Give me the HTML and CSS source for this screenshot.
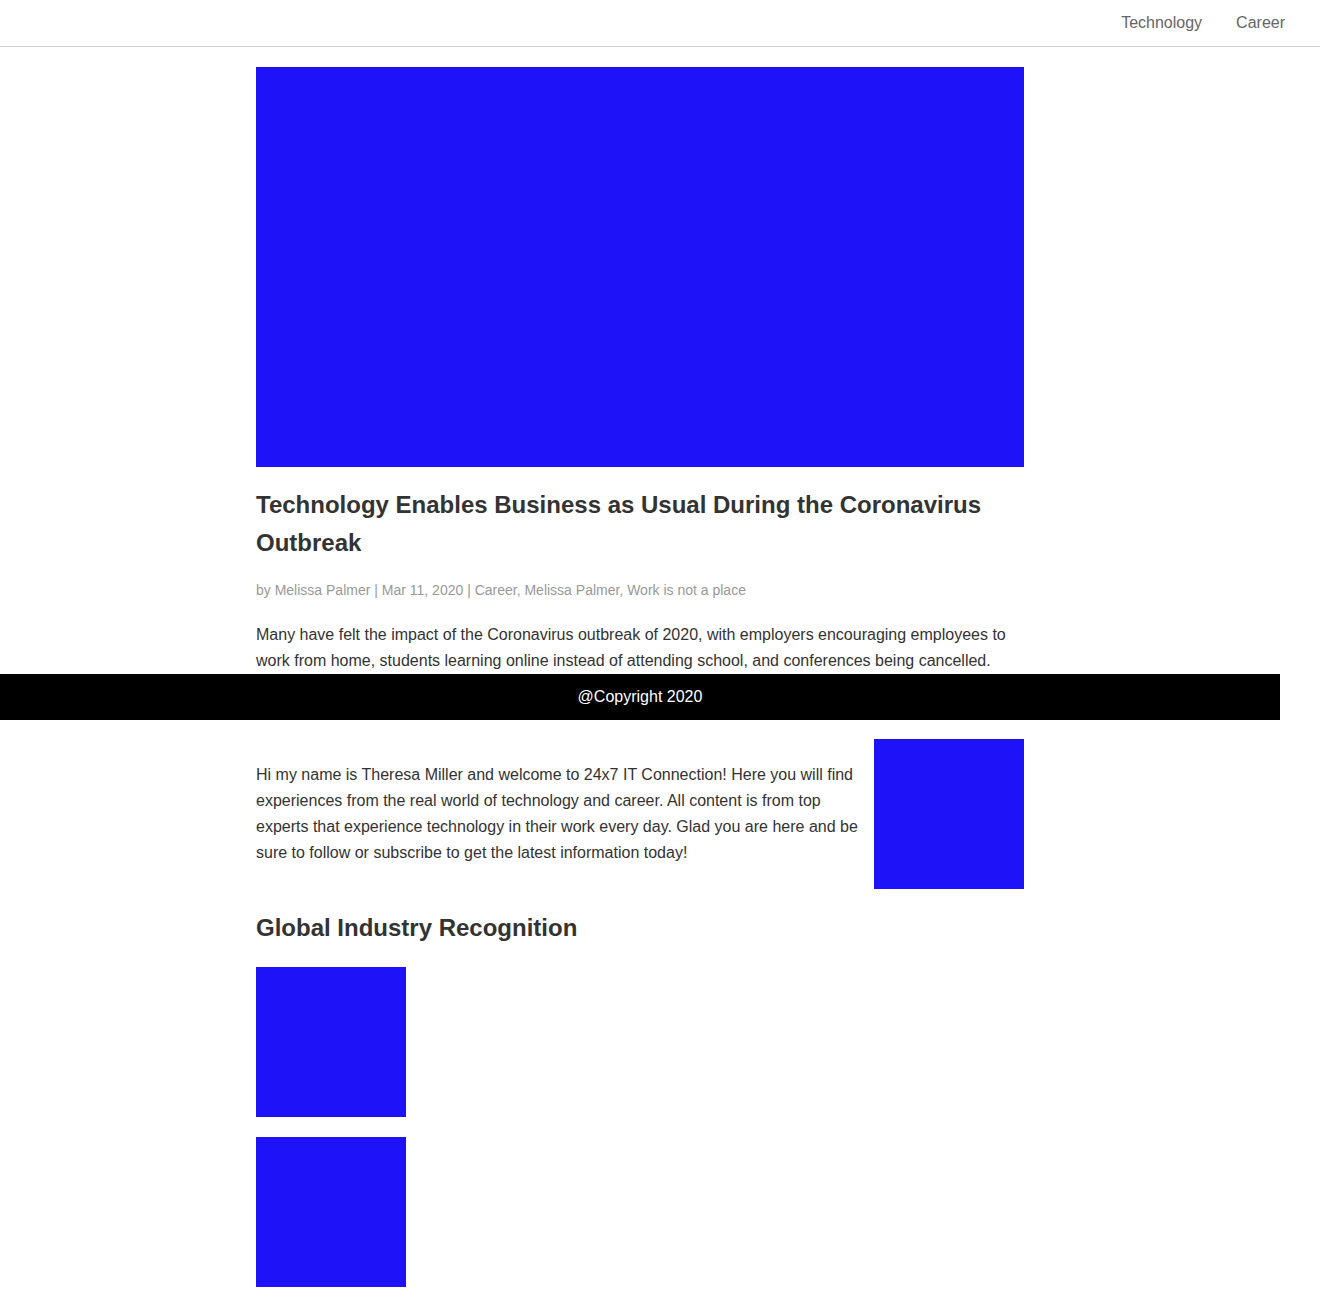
FILE: index.html
```html
<!DOCTYPE html>
<html lang="en">
<head>
<meta charset="utf-8">
<title>24x7 IT Connection</title>
<link rel="stylesheet" href="styles.css">
</head>
<body>
<header class="site-header">
  <nav class="nav">
    <a class="nav-link" href="#">Technology</a>
    <a class="nav-link" href="#">Career</a>
  </nav>
</header>
<div class="page">
  <main class="content">
    <article class="post">
      <div class="hero"></div>
      <h1 class="post-title">Technology Enables Business as Usual During the Coronavirus Outbreak</h1>
      <p class="post-meta">by Melissa Palmer | Mar 11, 2020 | Career, Melissa Palmer, Work is not a place</p>
      <p class="post-text">Many have felt the impact of the Coronavirus outbreak of 2020, with employers encouraging employees to work from home, students learning online instead of attending school, and conferences being cancelled.</p>
    </article>
    <section class="about">
      <p class="about-text">Hi my name is Theresa Miller and welcome to 24x7 IT Connection! Here you will find experiences from the real world of technology and career. All content is from top experts that experience technology in their work every day. Glad you are here and be sure to follow or subscribe to get the latest information today!</p>
      <div class="about-photo"></div>
    </section>
    <section class="recognition">
      <h2 class="section-title">Global Industry Recognition</h2>
      <div class="badges">
        <div class="badge"></div>
        <div class="badge"></div>
      </div>
    </section>
  </main>
</div>
<footer class="site-footer">@Copyright 2020</footer>
</body>
</html>
```
FILE: styles.css
```css
html, body {
  margin: 0;
  padding: 0;
  background: #fff;
}
body {
  font-family: "Liberation Sans", Arial, Helvetica, sans-serif;
  color: #333;
  position: relative;
}
.site-header {
  height: 46px;
  border-bottom: 1px solid #cfcfcf;
  display: flex;
  justify-content: flex-end;
  align-items: center;
  padding-right: 35px;
}
.nav {
  display: flex;
  gap: 34px;
}
.nav-link {
  color: #666;
  text-decoration: none;
  font-size: 16px;
}
.page {
  padding-right: 40px;
}
.content {
  width: 768px;
  margin: 0 auto;
  padding-top: 20px;
  padding-bottom: 20px;
}
.hero {
  height: 400px;
  background: #1e12f8;
}
.post-title {
  font-size: 24px;
  line-height: 38px;
  font-weight: bold;
  margin: 19px 0 0;
  color: #333;
}
.post-meta {
  font-size: 14px;
  line-height: 22px;
  color: #999;
  margin: 17px 0 0;
}
.post-text {
  font-size: 16px;
  line-height: 25.6px;
  margin: 21px 0 0;
}
.about {
  display: flex;
  align-items: center;
  gap: 14px;
  margin-top: 66px;
}
.about-text {
  flex: 1;
  margin: 0;
  font-size: 16px;
  line-height: 26px;
}
.about-photo {
  width: 150px;
  height: 150px;
  flex: none;
  background: #1e12f8;
}
.section-title {
  font-size: 24px;
  line-height: 38px;
  font-weight: bold;
  margin: 20px 0 0;
  color: #333;
}
.badges {
  display: flex;
  flex-direction: column;
  gap: 20px;
  margin-top: 20px;
}
.badge {
  width: 150px;
  height: 150px;
  background: #1e12f8;
}
.site-footer {
  position: absolute;
  top: 674px;
  left: 0;
  right: 40px;
  height: 46px;
  background: #000;
  color: #fff;
  font-size: 16px;
  display: flex;
  align-items: center;
  justify-content: center;
}
```
